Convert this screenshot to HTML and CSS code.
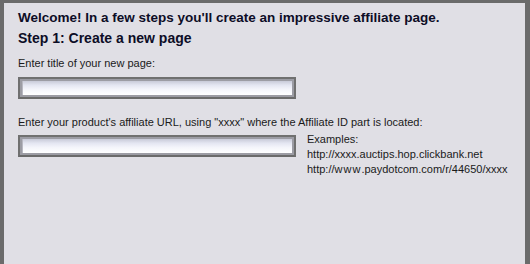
FILE: index.html
```html
<!DOCTYPE html>
<html>
<head>
<meta charset="utf-8">
<link rel="stylesheet" href="styles.css">
</head>
<body>
<div class="frame">
  <div class="panel">
    <h1 class="title">Welcome! In a few steps you'll create an impressive affiliate page.</h1>
    <h2 class="step">Step 1: Create a new page</h2>
    <label class="label first">Enter title of your new page:</label>
    <div class="field first-field"><input class="input" type="text"></div>
    <label class="label second">Enter your product's affiliate URL, using "xxxx" where the Affiliate ID part is located:</label>
    <div class="row">
      <div class="field"><input class="input" type="text"></div>
      <div class="examples">
        <div>Examples:</div>
        <div>http://xxxx.auctips.hop.clickbank.net</div>
        <div>http://<span class="wide">www</span>.paydotcom.com/r/44650/xxxx</div>
      </div>
    </div>
  </div>
</div>
</body>
</html>
```
FILE: styles.css
```css
html, body {
  margin: 0;
  padding: 0;
  width: 530px;
  height: 264px;
  overflow: hidden;
  background: #6b6b6b;
}
.frame {
  box-sizing: border-box;
  width: 530px;
  height: 264px;
  padding: 3px 5px 0 4px;
}
.panel {
  background: #e0dfe5;
  height: 100%;
  box-sizing: border-box;
  padding: 5px 0 0 14px;
  font-family: "Liberation Sans", Arial, sans-serif;
  color: #1a1a1a;
}
.title {
  margin: 0;
  font-size: 13.5px;
  font-weight: bold;
  line-height: 20px;
  color: #0d0d26;
}
.step {
  margin: 0;
  font-size: 14px;
  font-weight: bold;
  line-height: 20px;
  color: #0d0d26;
}
.label {
  display: block;
  font-size: 11px;
  line-height: 14px;
}
.label.first {
  margin-top: 8px;
}
.label.second {
  margin-top: 16px;
}
.field {
  box-sizing: border-box;
  width: 278px;
  height: 22px;
  border: 2px solid #707070;
  border-bottom-color: #6a6a6a;
  background: #9c9ca4;
  padding: 2px;
}
.first-field {
  margin-top: 7px;
}
.input {
  display: block;
  box-sizing: border-box;
  width: 100%;
  height: 14px;
  border: 0;
  margin: 0;
  padding: 0;
  background: linear-gradient(#c8cad8 0%, #e4e6f2 30%, #f4f5fb 60%, #ffffff 100%);
  box-shadow: inset 1px 0 0 #b8b8c2;
  outline: none;
}
.row {
  display: flex;
  align-items: flex-start;
  margin-top: 6px;
}
.examples {
  margin-left: 11px;
  margin-top: -3px;
  font-size: 11px;
  line-height: 15px;
  color: #1a1a1a;
}
.wide {
  letter-spacing: 1px;
}
```
